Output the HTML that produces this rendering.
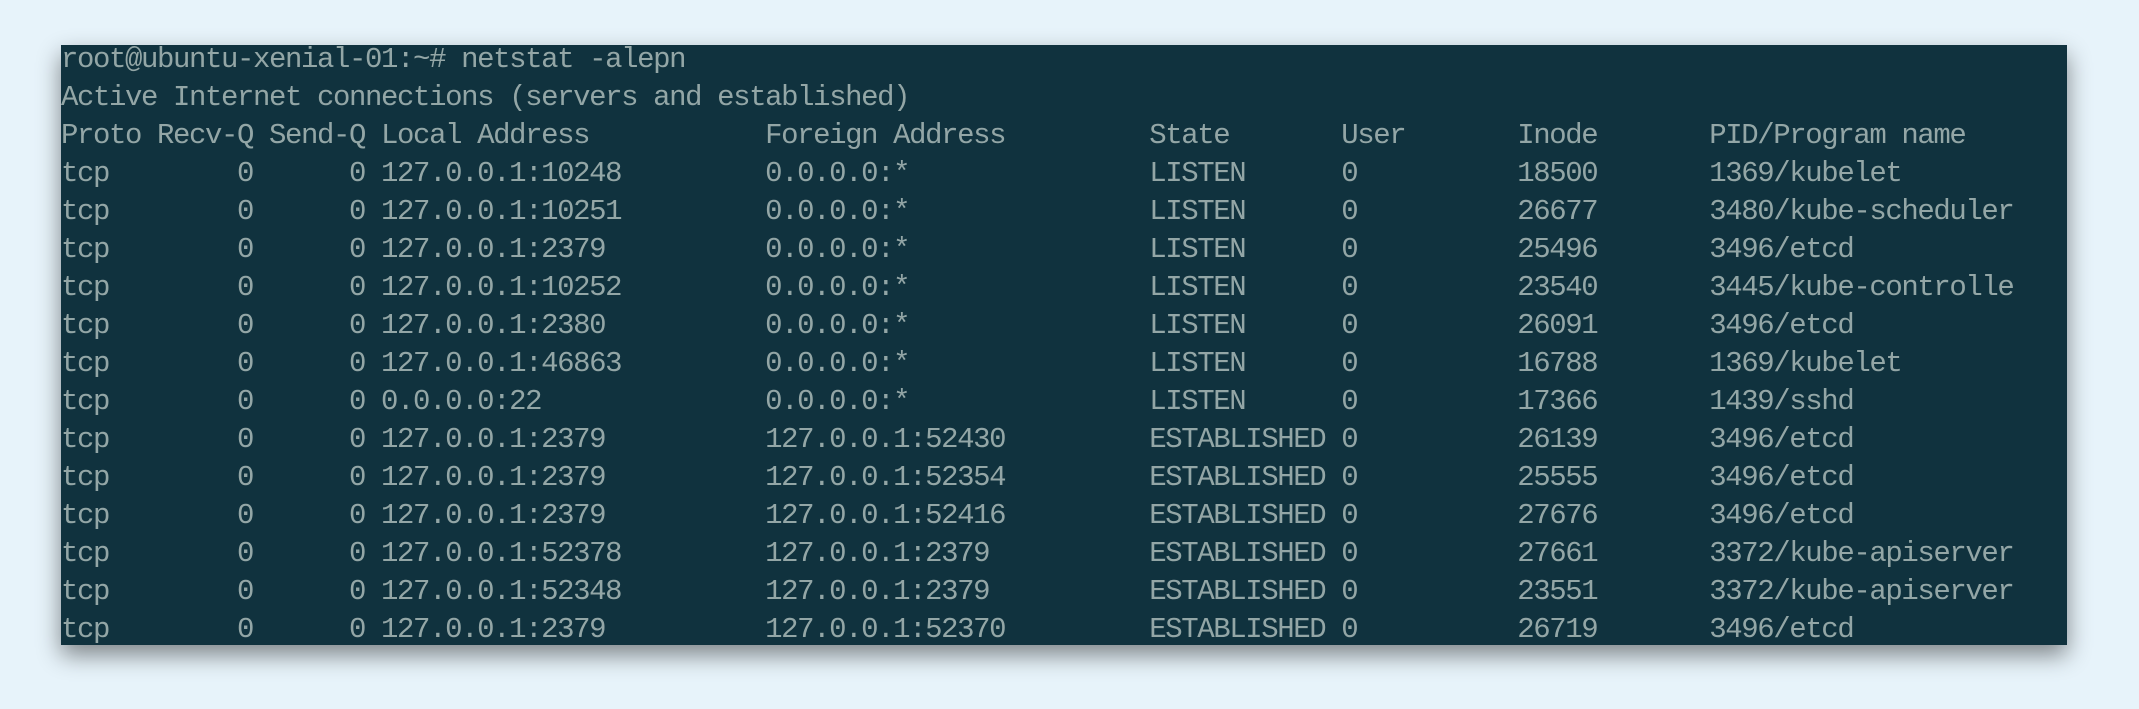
<!DOCTYPE html>
<html><head><meta charset="utf-8"><style>
html,body{margin:0;padding:0;}
body{width:2139px;height:709px;background:#e7f3fa;position:relative;overflow:hidden;}
.box{position:absolute;left:61px;top:45px;width:2006px;height:600px;background:#10323e;box-shadow:0 10px 22px rgba(0,0,0,.45);overflow:hidden;}
pre{margin:0;position:absolute;left:0;top:-4px;font-family:"Liberation Mono",monospace;font-size:29px;letter-spacing:-1.4px;line-height:38px;color:#93a6a6;}
</style></head><body>
<div class="box"><pre>root@ubuntu-xenial-01:~# netstat -alepn
Active Internet connections (servers and established)
Proto Recv-Q Send-Q Local Address           Foreign Address         State       User       Inode       PID/Program name
tcp        0      0 127.0.0.1:10248         0.0.0.0:*               LISTEN      0          18500       1369/kubelet
tcp        0      0 127.0.0.1:10251         0.0.0.0:*               LISTEN      0          26677       3480/kube-scheduler
tcp        0      0 127.0.0.1:2379          0.0.0.0:*               LISTEN      0          25496       3496/etcd
tcp        0      0 127.0.0.1:10252         0.0.0.0:*               LISTEN      0          23540       3445/kube-controlle
tcp        0      0 127.0.0.1:2380          0.0.0.0:*               LISTEN      0          26091       3496/etcd
tcp        0      0 127.0.0.1:46863         0.0.0.0:*               LISTEN      0          16788       1369/kubelet
tcp        0      0 0.0.0.0:22              0.0.0.0:*               LISTEN      0          17366       1439/sshd
tcp        0      0 127.0.0.1:2379          127.0.0.1:52430         ESTABLISHED 0          26139       3496/etcd
tcp        0      0 127.0.0.1:2379          127.0.0.1:52354         ESTABLISHED 0          25555       3496/etcd
tcp        0      0 127.0.0.1:2379          127.0.0.1:52416         ESTABLISHED 0          27676       3496/etcd
tcp        0      0 127.0.0.1:52378         127.0.0.1:2379          ESTABLISHED 0          27661       3372/kube-apiserver
tcp        0      0 127.0.0.1:52348         127.0.0.1:2379          ESTABLISHED 0          23551       3372/kube-apiserver
tcp        0      0 127.0.0.1:2379          127.0.0.1:52370         ESTABLISHED 0          26719       3496/etcd</pre></div>
</body></html>
